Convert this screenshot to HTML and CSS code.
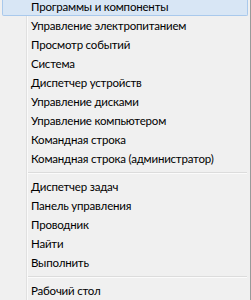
FILE: index.html
```html
<!DOCTYPE html>
<html lang="ru">
<head>
<meta charset="utf-8">
<title>Меню</title>
<link rel="stylesheet" href="styles.css">
</head>
<body>
<div class="menu">
  <div class="item active">Программы и компоненты</div>
  <div class="item">Управление электропитанием</div>
  <div class="item">Просмотр событий</div>
  <div class="item">Система</div>
  <div class="item">Диспетчер устройств</div>
  <div class="item">Управление дисками</div>
  <div class="item">Управление компьютером</div>
  <div class="item">Командная строка</div>
  <div class="item">Командная строка (администратор)</div>
  <div class="sep"></div>
  <div class="item">Диспетчер задач</div>
  <div class="item">Панель управления</div>
  <div class="item">Проводник</div>
  <div class="item">Найти</div>
  <div class="item">Выполнить</div>
  <div class="sep"></div>
  <div class="item">Рабочий стол</div>
</div>
</body>
</html>
```
FILE: styles.css
```css
html, body {
  margin: 0;
  padding: 0;
  background: #f0f0f0;
  overflow: hidden;
}
.menu {
  width: 250px;
  height: 300px;
  border-right: 1px solid #9a9a9a;
  display: flex;
  flex-direction: column;
  font-family: Lato, "Noto Sans", sans-serif;
  font-size: 11.5px;
  letter-spacing: -0.2px;
  color: #000;
  background: #f0f0f0 linear-gradient(to right, transparent 26px, #e0e0e0 26px, #e0e0e0 27px, #fafafa 27px, #fafafa 28px, transparent 28px);
}
.item {
  height: 19px;
  line-height: 19px;
  padding-left: 31px;
  margin: 0 2px 0 0;
  white-space: nowrap;
  box-sizing: border-box;
}
.item.active {
  height: 16px;
  margin: 0 2px 0 2px;
  padding-left: 28px;
  line-height: 14px;
  background: #d8e6f5;
  border: 1px solid #a9c9ec;
  border-top: 0;
  border-radius: 0 0 2px 2px;
}
.sep {
  height: 9px;
  display: flex;
  align-items: center;
  padding-left: 28px;
  padding-right: 3px;
}
.sep::before {
  content: "";
  flex: 1;
  height: 1px;
  background: #dcdcdc;
  box-shadow: 0 1px 0 #fbfbfb;
}
```
